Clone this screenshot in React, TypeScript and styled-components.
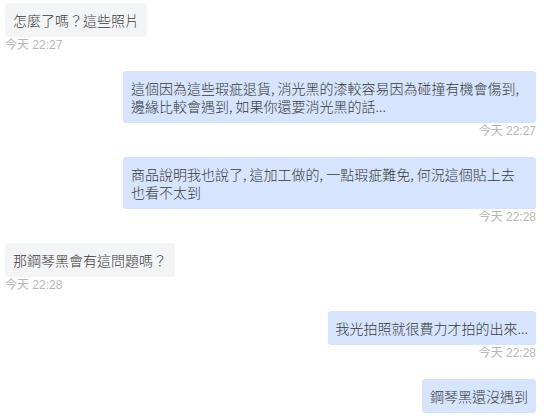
import React from "react";
import styled, { createGlobalStyle } from "styled-components";

const GlobalStyle = createGlobalStyle`
  html, body {
    margin: 0;
    padding: 0;
    background: #ffffff;
  }
  body {
    font-family: "Noto Sans CJK TC", "Liberation Sans", sans-serif;
  }
`;

const ChatList = styled.div`
  display: flex;
  flex-direction: column;
  gap: 18px;
  padding: 3px 8px 0 5px;
  width: 544px;
  height: 416px;
  box-sizing: border-box;
  overflow: hidden;
`;

const MessageRow = styled.div<{ $mine?: boolean }>`
  display: flex;
  flex-direction: column;
  align-items: ${(p) => (p.$mine ? "flex-end" : "flex-start")};
`;

const Bubble = styled.div<{ $mine?: boolean }>`
  max-width: 413px;
  box-sizing: border-box;
  padding: 8px;
  border-radius: 3px;
  background: ${(p) => (p.$mine ? "#d6e4fd" : "#f3f4f6")};
  color: #3a3a3a;
  font-size: 14px;
  font-weight: 300;
  line-height: 18px;
  word-break: break-all;
`;

const Time = styled.div`
  font-family: "Liberation Sans", "Noto Sans CJK TC", sans-serif;
  font-size: 12px;
  line-height: 16px;
  color: #b8b8b8;
`;

type Message = {
  text: string;
  time?: string;
  mine?: boolean;
};

const messages: Message[] = [
  { text: "怎麼了嗎？這些照片", time: "今天 22:27" },
  {
    text: "這個因為這些瑕疵退貨, 消光黑的漆較容易因為碰撞有機會傷到, 邊緣比較會遇到, 如果你還要消光黑的話...",
    time: "今天 22:27",
    mine: true,
  },
  {
    text: "商品說明我也說了, 這加工做的, 一點瑕疵難免, 何況這個貼上去也看不太到",
    time: "今天 22:28",
    mine: true,
  },
  { text: "那鋼琴黑會有這問題嗎？", time: "今天 22:28" },
  { text: "我光拍照就很費力才拍的出來...", time: "今天 22:28", mine: true },
  { text: "鋼琴黑還沒遇到", mine: true },
];

export default function App() {
  return (
    <>
      <GlobalStyle />
      <ChatList>
        {messages.map((m, i) => (
          <MessageRow key={i} $mine={m.mine}>
            <Bubble $mine={m.mine}>{m.text}</Bubble>
            {m.time && <Time>{m.time}</Time>}
          </MessageRow>
        ))}
      </ChatList>
    </>
  );
}
